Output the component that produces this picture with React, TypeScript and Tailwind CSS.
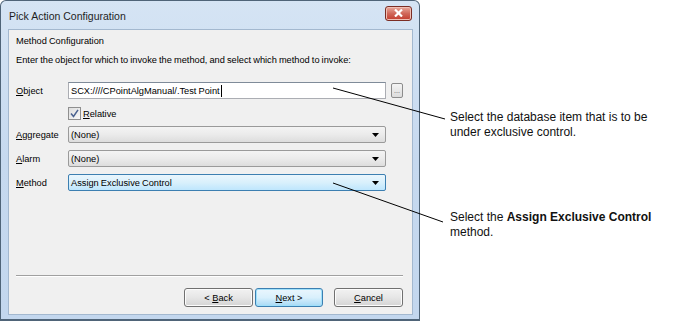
import React from "react";

const U = ({ c }: { c: string }) => <span className="underline underline-offset-[1px]">{c}</span>;

function Arrow() {
  return (
    <svg width="7" height="4" viewBox="0 0 7 4" className="block">
      <polygon points="0,0 7,0 3.5,4" fill="#000" />
    </svg>
  );
}

function Select({ text, active }: { text: string; active?: boolean }) {
  return (
    <div
      className={
        "w-[318px] h-[17px] rounded-[2px] border flex items-center justify-between pl-[2px] pr-[6px] " +
        (active
          ? "border-[#3c7fb1] bg-gradient-to-b from-[#eaf6fd] via-[#d9f0fc] to-[#bee6fd]"
          : "border-[#9a9a9a] bg-gradient-to-b from-[#f4f4f4] via-[#ebebeb] to-[#dddddd]")
      }
    >
      <span className="leading-[12px]">{text}</span>
      <Arrow />
    </div>
  );
}

function Row({ label, children }: { label: React.ReactNode; children: React.ReactNode }) {
  return (
    <div className="flex items-center h-[17px]">
      <div className="w-[52px] leading-[12px]">{label}</div>
      {children}
    </div>
  );
}

function Btn({ children, w, def }: { children: React.ReactNode; w: string; def?: boolean }) {
  return (
    <div
      className={
        w +
        " h-[19px] rounded-[3px] border flex items-center justify-center leading-[12px] " +
        (def
          ? "border-[#3c7fb1] bg-gradient-to-b from-[#eaf6fd] via-[#d9f0fc] to-[#a7d9f5] shadow-[inset_0_0_0_1px_#9fe0fa]"
          : "border-[#707070] bg-gradient-to-b from-[#f2f2f2] via-[#e6e6e6] to-[#d4d4d4] shadow-[inset_0_0_0_1px_#fcfcfc]")
      }
    >
      {children}
    </div>
  );
}

export default function App() {
  return (
    <div className="relative w-[680px] h-[321px] bg-white flex" style={{ fontFamily: '"Liberation Sans", Arial, sans-serif' }}>
      {/* Window */}
      <div className="w-[420px] h-[321px] shrink-0 flex flex-col rounded-t-[6px] border border-b-2 border-[#4f6478] bg-gradient-to-b from-[#d5e4f4] via-[#c6d9ef] to-[#c3d7ee] pl-[7px] pr-[6px] pb-[4px]">
        {/* Title bar */}
        <div className="h-[28px] flex items-center justify-between pl-[1px] pr-[1px]">
          <span className="text-[10.5px] text-[#1e1e1e] leading-[12px] mt-[2px]">Pick Action Configuration</span>
          <div className="w-[27px] h-[15px] mb-[4px] rounded-[3px] border border-[#7b2d24] bg-gradient-to-b from-[#e8a99d] via-[#d0685a] to-[#c2392c] flex items-center justify-center shadow-[inset_0_0_0_1px_#f0c0b5]">
            <svg width="9" height="8" viewBox="0 0 9 8">
              <path d="M1 0.5 L8 7.5 M8 0.5 L1 7.5" stroke="#fff" strokeWidth="2.2" />
            </svg>
          </div>
        </div>
        {/* Content */}
        <div className="flex-1 flex flex-col bg-[#f0f0f0] border border-[#a3b8cf] pl-[7px] pr-[9px] pb-[7px] text-[9.25px] text-black [word-spacing:-0.5px]">
          <div className="mt-[5px] h-[12px] leading-[12px]">Method Configuration</div>
          <div className="mt-[7px] h-[12px] leading-[12px]">Enter the object for which to invoke the method, and select which method to invoke:</div>
          <div className="mt-[16px]">
            <Row label={<><U c="O" />bject</>}>
              <div className="w-[318px] h-[17px] bg-white border border-[#abadb3] border-t-[#7f8b99] flex items-center pl-[2px]">
                <span className="leading-[12px]">SCX:////CPointAlgManual/.Test Point</span>
                <span className="w-px h-[12px] bg-black ml-[1px]" />
              </div>
              <div className="ml-[5px] w-[12px] h-[15px] rounded-[2px] border border-[#8c8c8c] bg-gradient-to-b from-[#f4f4f4] to-[#dcdcdc] flex items-end justify-center pb-[3px]">
                <span className="text-[7px] leading-[6px] text-[#555]">...</span>
              </div>
            </Row>
          </div>
          <div className="mt-[8px] h-[13px] flex items-center pl-[52px]">
            <div className="w-[13px] h-[13px] border border-[#8f8f8f] bg-gradient-to-br from-[#dedede] to-[#f8f8f8] flex items-center justify-center">
              <svg width="9" height="9" viewBox="0 0 9 9">
                <path d="M1 4.5 L3.5 7.5 L8 0.8" stroke="#4a6290" strokeWidth="1.5" fill="none" />
              </svg>
            </div>
            <span className="ml-[2px] leading-[12px]"><U c="R" />elative</span>
          </div>
          <div className="mt-[6px]">
            <Row label={<><U c="A" />ggregate</>}>
              <Select text="(None)" />
            </Row>
          </div>
          <div className="mt-[7px]">
            <Row label={<><U c="A" />larm</>}>
              <Select text="(None)" />
            </Row>
          </div>
          <div className="mt-[7px]">
            <Row label={<><U c="M" />ethod</>}>
              <Select text="Assign Exclusive Control" active />
            </Row>
          </div>
          <div className="flex-1" />
          <div className="h-[2px] border-t border-[#a0a0a0] border-b border-b-white" />
          <div className="mt-[11px] flex justify-end items-center [word-spacing:0px]">
            <Btn w="w-[69px]">&lt;&nbsp;<U c="B" />ack</Btn>
            <div className="ml-[2px]">
              <Btn w="w-[68px]" def><U c="N" />ext&nbsp;&gt;</Btn>
            </div>
            <div className="ml-[11px]">
              <Btn w="w-[69px]"><U c="C" />ancel</Btn>
            </div>
          </div>
        </div>
      </div>

      {/* Callout texts */}
      <div className="flex flex-col pl-[30px] text-[12px] leading-[15px] text-[#111]">
        <div className="mt-[110px]">
          Select the database item that is to be
          <br />
          under exclusive control.
        </div>
        <div className="mt-[70px]">
          Select the <span className="font-bold">Assign Exclusive Control</span>
          <br />
          method.
        </div>
      </div>

      {/* Callout lines */}
      <svg className="absolute left-0 top-0 pointer-events-none" width="680" height="321">
        <line x1="333" y1="88" x2="445" y2="119" stroke="#000" strokeWidth="1" />
        <line x1="333" y1="183" x2="443" y2="222" stroke="#000" strokeWidth="1" />
      </svg>
    </div>
  );
}
